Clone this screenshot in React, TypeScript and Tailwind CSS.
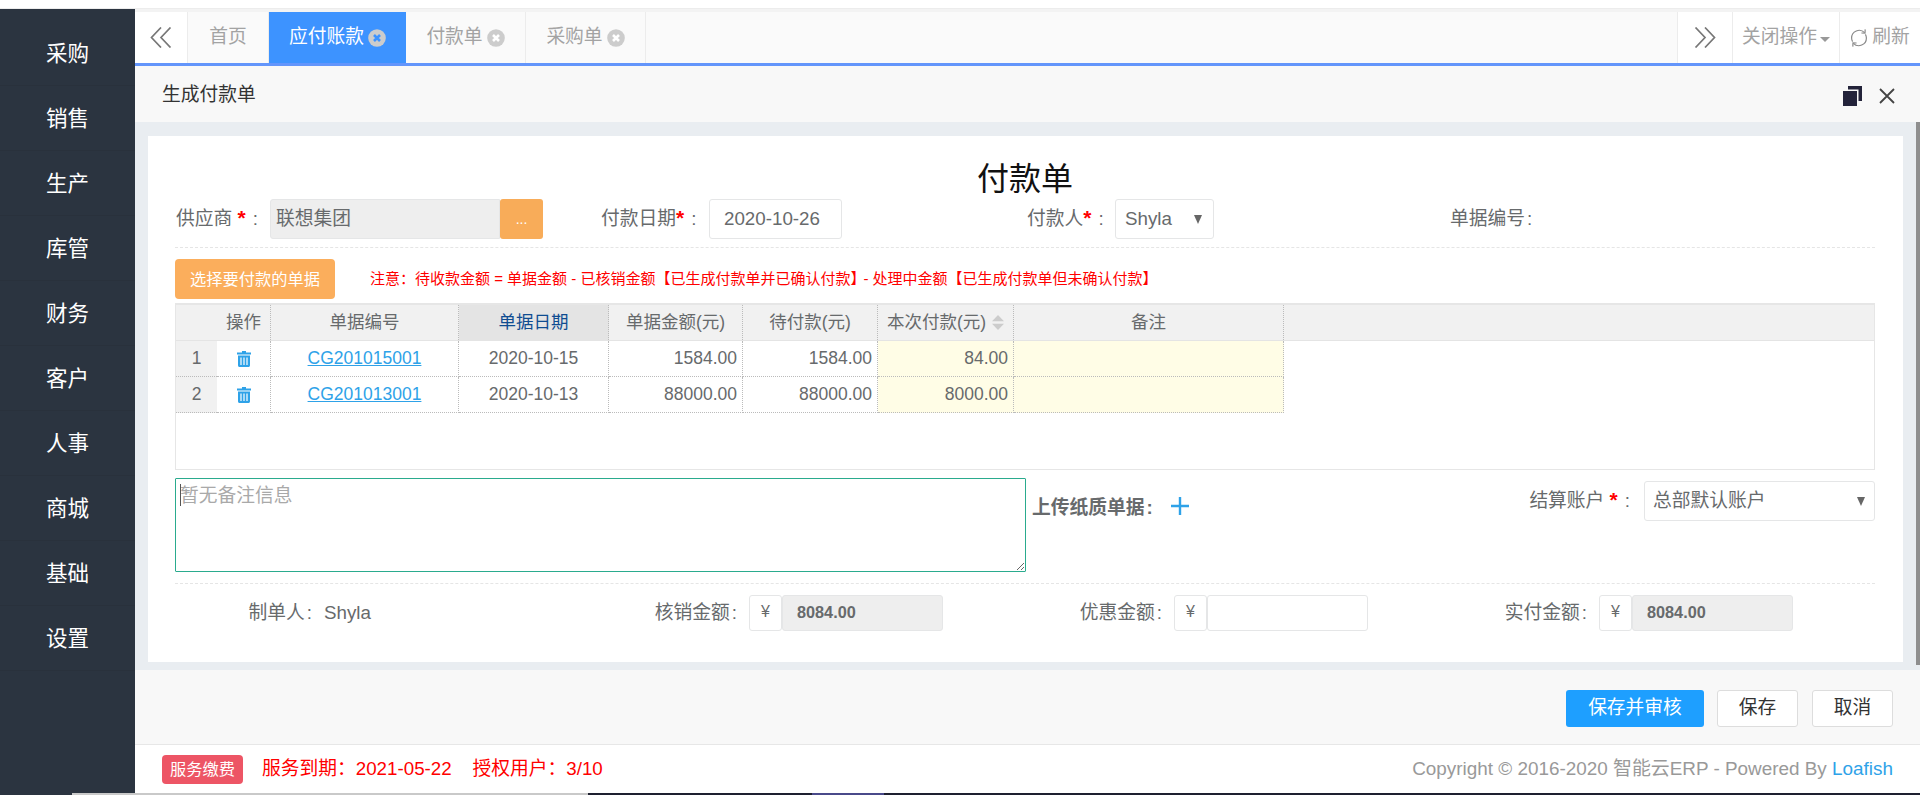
import React from "react";

const menu = ["采购", "销售", "生产", "库管", "财务", "客户", "人事", "商城", "基础", "设置"];

function Chevrons({ dir }: { dir: "l" | "r" }) {
  return (
    <svg width="22" height="21" viewBox="0 0 22 21" fill="none" stroke="#777" strokeWidth="1.7">
      {dir === "l" ? (
        <path d="M11 0.5 L1.5 10.5 L11 20.5 M20.5 0.5 L11 10.5 L20.5 20.5" />
      ) : (
        <path d="M1.5 0.5 L11 10.5 L1.5 20.5 M11 0.5 L20.5 10.5 L11 20.5" />
      )}
    </svg>
  );
}

function TabClose({ x }: { x: string }) {
  return (
    <svg width="18" height="18" viewBox="0 0 18 18" className="shrink-0">
      <circle cx="9" cy="9" r="8.8" fill="#cccccc" />
      <path d="M6 6 L12 12 M12 6 L6 12" stroke={x} strokeWidth="2.6" />
    </svg>
  );
}

function Trash() {
  return (
    <svg width="14" height="16" viewBox="0 0 14 16" fill="#2ea2e8">
      <path d="M5 0 H9 V1.6 H14 V3.6 H0 V1.6 H5 Z" />
      <path fillRule="evenodd" d="M1 4.6 H13 V14.2 C13 15.2 12.3 16 11.4 16 H2.6 C1.7 16 1 15.2 1 14.2 Z M3.4 6.4 V14 H4.6 V6.4 Z M6.4 6.4 V14 H7.6 V6.4 Z M9.4 6.4 V14 H10.6 V6.4 Z" />
    </svg>
  );
}

function Caret() {
  return <span className="w-0 h-0 border-l-[4px] border-r-[4px] border-t-[9px] border-l-transparent border-r-transparent border-t-[#666]" />;
}

function Star() {
  return <span className="text-[#ff0000] font-bold text-[21px] leading-[0]">*</span>;
}

function Tab({ label, active, width }: { label: string; active?: boolean; width: string }) {
  return (
    <div className={`${width} h-full flex items-center justify-center gap-[4px] border-r border-[#ececec] ${active ? "bg-[#3d93ff] text-white border-r-0" : "text-[#a3a3a3]"}`}>
      <span>{label}</span>
      <TabClose x={active ? "#3d93ff" : "#ffffff"} />
    </div>
  );
}

function Money({ label, value }: { label: string; value?: string }) {
  return (
    <div className="flex items-center">
      <span className="w-[137px] text-right pt-[1px]">{label}<span className="ml-[2px]">:</span></span>
      <span className="w-[12px]" />
      <span className="w-[33px] h-[36px] flex items-center justify-center border border-[#e5e6e7] rounded-[3px] text-[16px] pb-[2px]">¥</span>
      {value ? (
        <span className="w-[161px] h-[36px] flex items-center pl-[14px] pb-[1px] bg-[#eeeeee] border border-[#e5e6e7] rounded-[3px] text-[16.25px] font-bold">{value}</span>
      ) : (
        <span className="w-[161px] h-[36px] border border-[#e5e6e7] rounded-[3px]" />
      )}
    </div>
  );
}

const colCls = "h-full flex items-center border-r border-dotted border-[#bbbbbb] shrink-0";

function Row({ n, code, date, a, b, c }: { n: string; code: string; date: string; a: string; b: string; c: string }) {
  return (
    <div className="h-[36px] flex">
      <div className="w-[41px] h-full flex items-center justify-center bg-[#f1f1f1] border-b border-dotted border-[#bbbbbb] shrink-0">{n}</div>
      <div className={`w-[54px] justify-center border-b ${colCls}`}><Trash /></div>
      <div className={`w-[188px] justify-center border-b ${colCls}`}>
        <span className="text-[#2ea2e8] underline">{code}</span>
      </div>
      <div className={`w-[150px] justify-center border-b ${colCls}`}>{date}</div>
      <div className={`w-[134px] justify-end pr-[5px] border-b ${colCls}`}>{a}</div>
      <div className={`w-[135px] justify-end pr-[5px] border-b ${colCls}`}>{b}</div>
      <div className={`w-[136px] justify-end pr-[5px] bg-[#fffde6] border-b ${colCls}`}>{c}</div>
      <div className={`w-[270px] bg-[#fffde6] border-b ${colCls}`} />
    </div>
  );
}

export default function App() {
  return (
    <div className="w-[1920px] h-[795px] overflow-hidden flex flex-col bg-white text-[#676a6c] text-[18.75px] font-['Liberation_Sans','Noto_Sans_CJK_SC',sans-serif]">
      <div className="h-[9px] shrink-0 bg-white border-b border-[#ececec]" />
      <div className="h-[784px] flex shrink-0">
        <nav className="w-[135px] shrink-0 bg-[#2b3440] pt-[12px] text-white text-[21.5px]">
          {menu.map((m) => (
            <div key={m} className="h-[65px] flex items-center justify-center pt-[2px] border-b border-[#29313c]">{m}</div>
          ))}
        </nav>
        <div className="flex-1 flex flex-col min-w-0">
          <div className="h-[3px] bg-[#f3f3f3]" />
          <div className="h-[51px] flex bg-[#fafafa]">
            <div className="w-[53px] h-full flex items-center justify-center bg-white border-r border-[#ececec]"><Chevrons dir="l" /></div>
            <div className="w-[81px] h-full flex items-center justify-center border-r border-[#ececec] text-[#a3a3a3]">首页</div>
            <Tab label="应付账款" active width="w-[137px]" />
            <Tab label="付款单" width="w-[120px]" />
            <Tab label="采购单" width="w-[120px]" />
            <div className="flex-1" />
            <div className="w-[55px] h-full flex items-center justify-center bg-white border-l border-[#ececec]"><Chevrons dir="r" /></div>
            <div className="w-[107px] h-full flex items-center justify-center gap-[3px] bg-white border-l border-[#ececec] text-[#a3a3a3]">
              <span>关闭操作</span>
              <span className="w-0 h-0 mt-[3px] border-l-[5px] border-r-[5px] border-t-[5px] border-l-transparent border-r-transparent border-t-[#999]" />
            </div>
            <div className="w-[81px] h-full flex items-center justify-center gap-[4px] bg-white border-l border-[#ececec] text-[#a3a3a3]">
              <svg width="18" height="20" viewBox="0 0 18 20" fill="none" stroke="#8a8a8a" strokeWidth="1.2">
                <path d="M14.6 4.6 A7.6 7.6 0 0 0 1.6 10 A7.6 7.6 0 0 0 2.6 13.6" />
                <path d="M3.4 15.4 A7.6 7.6 0 0 0 16.4 10 A7.6 7.6 0 0 0 15.4 6.4" />
                <path d="M15.2 1.4 L15 5.2 L11.4 5" />
                <path d="M2.8 18.6 L3 14.8 L6.6 15" />
              </svg>
              <span>刷新</span>
            </div>
          </div>
          <div className="h-[3px] bg-[#6395fb]" />

          <div className="h-[56px] flex items-center justify-between bg-[#f8f8f8] pt-[4px] pl-[27px] pr-[25px] text-[#333333]">
            <span className="pb-[2px]">生成付款单</span>
            <div className="flex items-center gap-[17px]">
              <svg width="19" height="20" viewBox="0 0 19 20" fill="#23233a">
                <path d="M0 5 H14 V20 H0 Z" />
                <path d="M5 0 H19 V15 H15.5 V3.5 H5 Z" />
              </svg>
              <svg width="16" height="16" viewBox="0 0 16 16" fill="none" stroke="#444" strokeWidth="1.8">
                <path d="M1 1 L15 15 M15 1 L1 15" />
              </svg>
            </div>
          </div>

          <div className="h-[548px] flex bg-[#e9edf1]">
            <div className="w-[1781px] pl-[13px] pr-[13px] pt-[14px]">
              <div className="w-[1755px] h-[526px] bg-white pl-[27px] pr-[28px] pt-[23px]">
                <h1 className="h-[40px] leading-[40px] text-center text-[32px] text-[#111111]">付款单</h1>

                <div className="grid grid-cols-4 h-[40px] items-center">
                  <div className="flex items-center">
                    <span className="pl-px w-[95px] whitespace-pre">供应商 <Star /><span className="ml-[7px]">:</span></span>
                    <span className="w-[230px] h-[40px] flex items-center pl-[5px] bg-[#eeeeee] border border-[#e5e6e7] rounded-l-[3px]">联想集团</span>
                    <span className="w-[43px] h-[40px] flex items-center justify-center bg-[#f8ac59] rounded-[3px] text-white text-[14px]">...</span>
                  </div>
                  <div className="flex items-center">
                    <span className="pl-px w-[109px] whitespace-pre">付款日期<Star /><span className="ml-[7px]">:</span></span>
                    <span className="w-[133px] h-[40px] flex items-center pl-[14px] border border-[#e5e6e7] rounded-[3px]">2020-10-26</span>
                  </div>
                  <div className="flex items-center">
                    <span className="pl-[2px] w-[90px] whitespace-pre">付款人<Star /><span className="ml-[7px]">:</span></span>
                    <span className="w-[99px] h-[40px] flex items-center justify-between pl-[9px] pr-[11px] border border-[#e5e6e7] rounded-[3px]">Shyla<Caret /></span>
                  </div>
                  <div>单据编号<span className="ml-[2px]">:</span></div>
                </div>
                <div className="mt-[8px] border-t border-dashed border-[#e5e5e5]" />

                <div className="mt-[11px] h-[40px] flex items-center">
                  <button className="w-[160px] h-[40px] bg-[#fbae5c] rounded-[4px] text-white text-[16.25px]">选择要付款的单据</button>
                  <span className="ml-[35px] text-[15px] text-[#ff0000] whitespace-nowrap">注意：待收款金额 = 单据金额 - 已核销金额【已生成付款单并已确认付款】<span className="-ml-[2px]">- 处理中金额【已生成付款单但未确认付款】</span></span>
                </div>

                <div className="mt-[4px] w-[1700px] h-[167px] border border-[#e6e6e6] text-[17.5px] border-t-2">
                  <div className="h-[36px] flex bg-[#f1f1f1] border-b border-[#e4e4e4]">
                    <div className="w-[41px] h-full shrink-0" />
                    <div className={`w-[54px] justify-center ${colCls}`}>操作</div>
                    <div className={`w-[188px] justify-center ${colCls}`}>单据编号</div>
                    <div className={`w-[150px] justify-center bg-[#e4e4e4] text-[#0f4c91] ${colCls}`}>单据日期</div>
                    <div className={`w-[134px] justify-center ${colCls}`}>单据金额(元)</div>
                    <div className={`w-[135px] justify-center ${colCls}`}>待付款(元)</div>
                    <div className={`w-[136px] justify-center gap-[6px] ${colCls}`}>
                      <span>本次付款(元)</span>
                      <svg width="12" height="15" viewBox="0 0 12 15" fill="#cccccc">
                        <path d="M6 0 L12 6.3 H0 Z M6 15 L12 8.7 H0 Z" />
                      </svg>
                    </div>
                    <div className={`w-[270px] justify-center ${colCls}`}>备注</div>
                  </div>
                  <Row n="1" code="CG201015001" date="2020-10-15" a="1584.00" b="1584.00" c="84.00" />
                  <Row n="2" code="CG201013001" date="2020-10-13" a="88000.00" b="88000.00" c="8000.00" />
                </div>

                <div className="mt-[8px] h-[94px] flex">
                  <div className="relative w-[851px] h-[94px] shrink-0">
                    <textarea
                      readOnly
                      placeholder="暂无备注信息"
                      className="block w-full h-full border border-[#2aab8e] outline-none pl-[4px] pt-[4px] leading-[26px] text-[18.75px] placeholder:text-[#a9a9a9] rounded-[1px]"
                    />
                    <span className="absolute left-[5px] top-[6px] w-px h-[22px] bg-[#555555]" />
                  </div>
                  <div className="h-[60px] w-[190px] shrink-0 ml-[6px] flex items-center font-bold text-[#676a6c]">
                    <span className="whitespace-nowrap">上传纸质单据<span className="ml-[2px]">:</span></span>
                    <svg width="18" height="18" viewBox="0 0 18 18" className="ml-[18px] -mt-[5px] shrink-0" fill="#2ea2e8">
                      <path d="M7.8 0 H10.2 V7.8 H18 V10.2 H10.2 V18 H7.8 V10.2 H0 V7.8 H7.8 Z" />
                    </svg>
                  </div>
                  <div className="flex-1 flex h-[40px] mt-[3px] items-center justify-end">
                    <span className="whitespace-pre mr-[14px]">结算账户 <Star /><span className="ml-[7px]">:</span></span>
                    <span className="w-[231px] h-[40px] flex items-center justify-between pl-[8px] pr-[9px] border border-[#e5e6e7] rounded-[3px]">总部默认账户<Caret /></span>
                  </div>
                </div>

                <div className="mt-[11px] border-t border-dashed border-[#e5e5e5]" />

                <div className="mt-[11px] grid grid-cols-4 h-[36px] items-center">
                  <div className="flex items-center pt-[1px]">
                    <span className="w-[137px] text-right">制单人<span className="ml-[2px]">:</span></span>
                    <span className="ml-[12px]">Shyla</span>
                  </div>
                  <Money label="核销金额" value="8084.00" />
                  <Money label="优惠金额" />
                  <Money label="实付金额" value="8084.00" />
                </div>
              </div>
            </div>
            <div className="w-[4px] h-[543px] bg-[#8e8e8e]" />
          </div>

          <div className="h-[74px] bg-[#f8f8f8] flex items-start justify-end gap-[14px] pt-[20px] pr-[27px]">
            <button className="w-[138px] h-[37px] -mr-px bg-[#1e9fff] text-white rounded-[3px]">保存并审核</button>
            <button className="w-[81px] h-[37px] bg-white text-[#333333] border border-[#dddddd] rounded-[3px]">保存</button>
            <button className="w-[81px] h-[37px] bg-white text-[#333333] border border-[#dddddd] rounded-[3px]">取消</button>
          </div>

          <footer className="h-[49px] bg-white border-t border-[#e7e7e7] flex items-center justify-between pl-[27px] pr-[27px]">
            <div className="flex items-center">
              <span className="w-[81px] h-[29px] flex items-center justify-center bg-[#ed5565] rounded-[4px] text-white text-[16.25px]">服务缴费</span>
              <span className="ml-[19px] text-[#ff0000] whitespace-pre">服务到期：2021-05-22    授权用户：3/10</span>
            </div>
            <div className="text-[#999999] text-[18.9px]">
              Copyright © 2016-2020 智能云ERP - Powered By <span className="text-[#2ea2e8]">Loafish</span>
            </div>
          </footer>
        </div>
      </div>
      <div className="h-[2px] flex shrink-0 bg-[#1e2030]">
        <div className="w-[72px] bg-[#2b3440]" />
        <div className="w-[516px] bg-[#c9c9c9]" />
        <div className="w-[224px]" />
        <div className="w-[72px] bg-[#4a4a8a]" />
      </div>
    </div>
  );
}
